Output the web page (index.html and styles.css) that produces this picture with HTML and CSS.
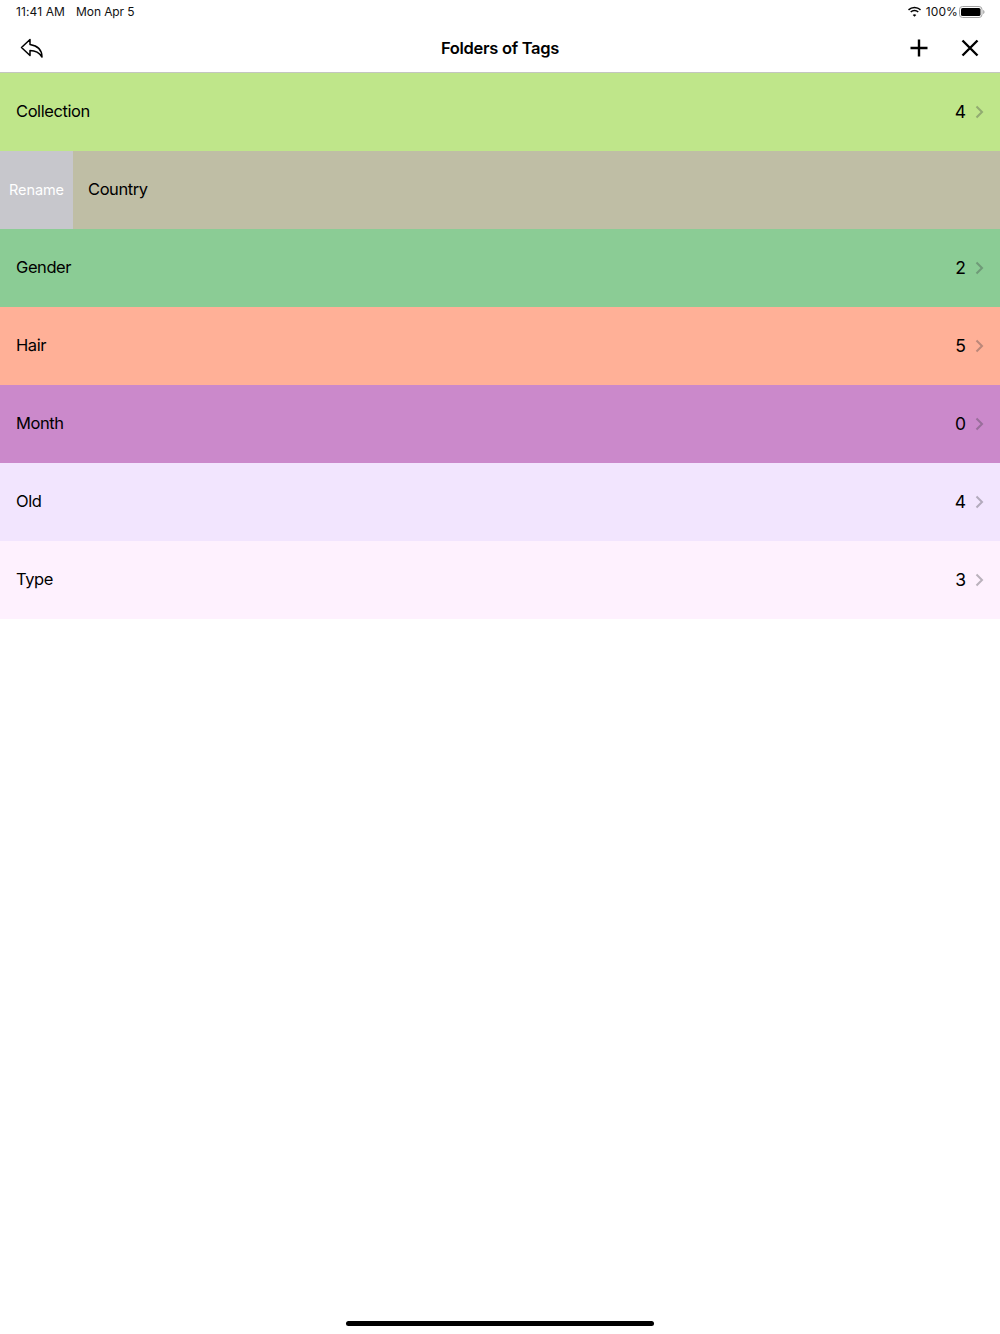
FILE: index.html
```html
<!DOCTYPE html>
<html lang="en">
<head>
<meta charset="utf-8">
<title>Folders of Tags</title>
<link rel="stylesheet" href="styles.css">
</head>
<body>
<div class="app">
  <div class="status">
    <div class="status-left"><span>11:41 AM</span><span class="date">Mon Apr 5</span></div>
    <div class="status-right">
      <svg class="wifi" width="15" height="11" viewBox="0 0 15 11"><path d="M7.5 2.2c2.1 0 4 .8 5.5 2.2l1-1.1A9.6 9.6 0 0 0 7.5.7 9.6 9.6 0 0 0 1 3.3l1 1.1a8 8 0 0 1 5.500-2.200z"/><path d="M7.500 5.300c1.200 0 2.300.4 3.200 1.200l1.100-1.100a6.300 6.300 0 0 0-8.600 0l1.100 1.100c.9-.8 2-1.200 3.200-1.200z"/><path d="M7.500 8.200c-.7 0-1.300.3-1.800.7l1.800 1.900 1.800-1.900c-.5-.4-1.100-.7-1.800-.7z"/></svg>
      <span class="pct">100%</span>
      <svg class="battery" width="26" height="12" viewBox="0 0 26 12"><rect x=".5" y=".5" width="22.500" height="11" rx="3" fill="none" stroke="#a3a3a3"/><rect x="2" y="2" width="19.500" height="8" rx="1.600"/><path d="M24.200 4v4c.8-.2 1.300-1 1.300-2s-.5-1.800-1.300-2z" fill="#a3a3a3"/></svg>
    </div>
  </div>
  <header class="nav">
    <svg class="back" width="26" height="24" viewBox="0 0 26 24"><path d="M11 2.500 2.500 10.500l8.500 8v-5c5 0 9 1.500 12 6.500 0-6-3-11-12-12.500z" fill="none" stroke="#000" stroke-width="1.500" stroke-linejoin="round"/></svg>
    <h1 class="title">Folders of Tags</h1>
    <div class="actions">
      <svg width="20" height="20" viewBox="0 0 20 20"><path d="M10 1.500v17M1.500 10h17" stroke="#000" stroke-width="2.400" fill="none"/></svg>
      <svg width="20" height="20" viewBox="0 0 20 20"><path d="M2.500 2.500l15 15M17.500 2.500l-15 15" stroke="#000" stroke-width="2.400" fill="none"/></svg>
    </div>
  </header>
  <main class="list">
    <div class="row c-collection"><span class="name">Collection</span><span class="count">4</span><svg class="chev" width="9" height="14" viewBox="0 0 9 14"><path d="M1.500 1.500 7 7l-5.500 5.500"/></svg></div>
    <div class="row c-country"><span class="rename">Rename</span><span class="name name-swiped">Country</span></div>
    <div class="row c-gender"><span class="name">Gender</span><span class="count">2</span><svg class="chev" width="9" height="14" viewBox="0 0 9 14"><path d="M1.500 1.500 7 7l-5.500 5.500"/></svg></div>
    <div class="row c-hair"><span class="name">Hair</span><span class="count">5</span><svg class="chev" width="9" height="14" viewBox="0 0 9 14"><path d="M1.500 1.500 7 7l-5.500 5.500"/></svg></div>
    <div class="row c-month"><span class="name">Month</span><span class="count">0</span><svg class="chev" width="9" height="14" viewBox="0 0 9 14"><path d="M1.500 1.500 7 7l-5.500 5.500"/></svg></div>
    <div class="row c-old"><span class="name">Old</span><span class="count">4</span><svg class="chev" width="9" height="14" viewBox="0 0 9 14"><path d="M1.500 1.500 7 7l-5.500 5.500"/></svg></div>
    <div class="row c-type"><span class="name">Type</span><span class="count">3</span><svg class="chev" width="9" height="14" viewBox="0 0 9 14"><path d="M1.500 1.500 7 7l-5.500 5.500"/></svg></div>
  </main>
  <div class="home"><div class="home-bar"></div></div>
</div>
</body>
</html>
```

FILE: styles.css
```css
* { box-sizing: border-box; }
html, body { margin: 0; padding: 0; background: #fff; }
body { font-family: Inter, "Liberation Sans", sans-serif; color: #000; }
.app { width: 1000px; height: 1334px; display: flex; flex-direction: column; overflow: hidden; }
.status { height: 24px; padding: 0 15px 2px 16px; display: flex; justify-content: space-between; align-items: center; font-size: 12px; letter-spacing: 0.12px; color: #111; }
.status-left { display: flex; gap: 11px; }
.date { letter-spacing: -0.1px; }
.status-right { display: flex; align-items: center; gap: 3px; }
.wifi { fill: #000; margin-top: 1px; margin-right: 1px; }
.battery { margin-top: 2px; margin-left: -2px; }
.nav { height: 49px; border-bottom: 1px solid #c4c6c0; padding: 0 20px 0 19px; display: flex; align-items: center; justify-content: space-between; position: relative; }
.back { margin-top: 1px; }
.title { position: absolute; left: 0; right: 0; margin: 0; text-align: center; font-size: 16.500px; font-weight: 600; line-height: 48px; letter-spacing: -0.3px; }
.actions { display: flex; gap: 31px; position: relative; }
.list { display: flex; flex-direction: column; }
.row { height: 78px; display: flex; align-items: center; padding: 0 16px; font-size: 16.500px; letter-spacing: -0.42px; flex: none; }
.name { flex: 1; padding-bottom: 2px; }
.count { margin-right: 9px; padding-bottom: 2px; font-size: 17.500px; letter-spacing: 0; }
.chev { fill: none; stroke: rgba(60, 60, 67, 0.35); stroke-width: 2; }
.c-collection { background: #bfe68a; }
.c-country { background: #bfbea5; padding: 0; }
.c-gender { background: #8bcc95; }
.c-hair { background: #ffb097; }
.c-month { background: #cb89cb; }
.c-old { background: #f2e5fe; }
.c-type { background: #fef1fe; }
.rename { width: 73px; height: 100%; background: #c7c7cc; color: #fff; font-size: 14.500px; letter-spacing: -0.1px; padding-bottom: 2px; display: flex; align-items: center; justify-content: center; }
.name-swiped { padding-left: 15px; }
.home { margin-top: auto; height: 13px; display: flex; justify-content: center; }
.home-bar { width: 308px; height: 5px; border-radius: 3px; background: #000; }
```
